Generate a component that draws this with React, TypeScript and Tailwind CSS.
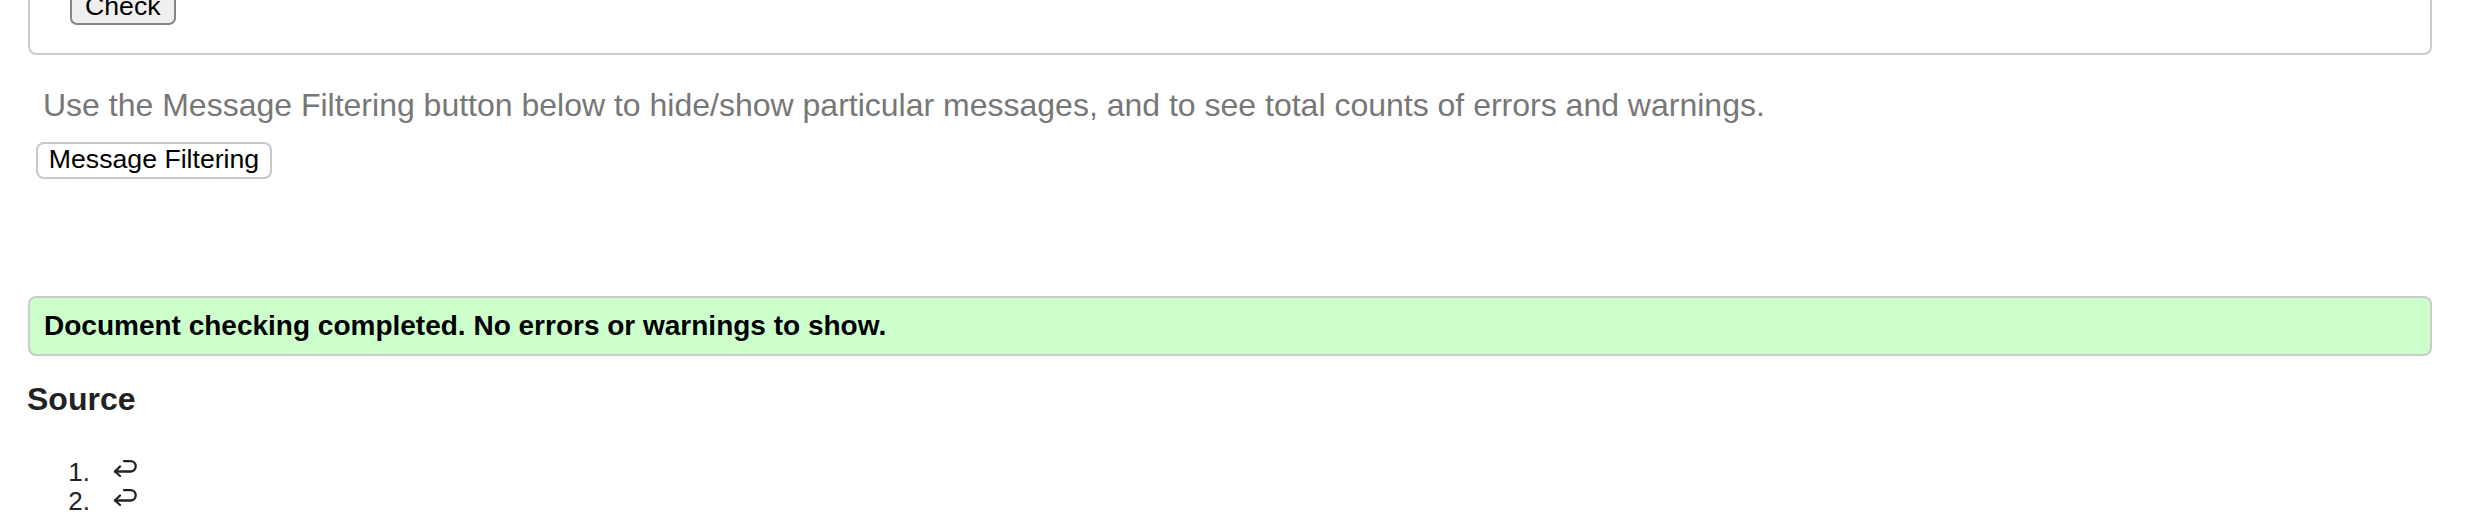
import React from "react";

function ReturnArrow() {
  return (
    <svg width="24" height="18" viewBox="0 0 24 18" fill="none" stroke="#222" strokeWidth="2.3" strokeLinecap="round" strokeLinejoin="round">
      <path d="M2 12.5 H17.5 A5.2 5.2 0 0 0 17.5 2.1 H11" />
      <path d="M7 7.5 L2 12.5 L7 17" />
    </svg>
  );
}

export default function App() {
  return (
    <div className="w-[2478px] h-[520px] overflow-hidden bg-white font-['Liberation_Sans',Arial,sans-serif]">
      <div className="ml-[28px] w-[2404px] flex flex-col -mt-[20px]">
        {/* fieldset */}
        <div className="border-2 border-[#cccccc] rounded-[8px] pl-[40px] pt-[6px] pb-[28px]">
          <button className="h-[37px] px-[13px] bg-[#efefef] border-2 border-[#858585] rounded-[7px] text-[26.67px] leading-none text-black flex items-center">
            Check
          </button>
        </div>

        <p className="mt-[32px] ml-[15px] text-[32px] text-[#777777] leading-[37px]">
          Use the Message Filtering button below to hide/show particular messages, and to see total counts of errors and warnings.
        </p>

        <div className="mt-[18px] ml-[8px]">
          <button className="h-[37px] w-[236px] bg-white border-2 border-[#c9c9c9] rounded-[8px] text-[26.67px] leading-none text-black flex items-center justify-center pb-[2px]">
            Message Filtering
          </button>
        </div>

        <div className="mt-[117px] border-2 border-[#cccccc] rounded-[8px] bg-[#ccffcc] py-[12px] pl-[14px]">
          <p className="text-[28px] font-bold text-black leading-[32px]">
            Document checking completed. No errors or warnings to show.
          </p>
        </div>

        <h3 className="mt-[25px] -ml-[1px] text-[32px] font-bold text-[#222222] leading-[37px]">Source</h3>

        <div className="mt-[40px] flex flex-col text-[26px] leading-[29px] text-[#222222]">
          <div className="flex h-[29px]">
            <span className="w-[62px] text-right">1.</span>
            <span className="ml-[23px] mt-[1px]"><ReturnArrow /></span>
          </div>
          <div className="flex h-[29px]">
            <span className="w-[62px] text-right">2.</span>
            <span className="ml-[23px] mt-[1px]"><ReturnArrow /></span>
          </div>
          <div className="flex h-[29px]">
            <span className="w-[62px] text-right">3.</span>
          </div>
        </div>
      </div>
    </div>
  );
}
